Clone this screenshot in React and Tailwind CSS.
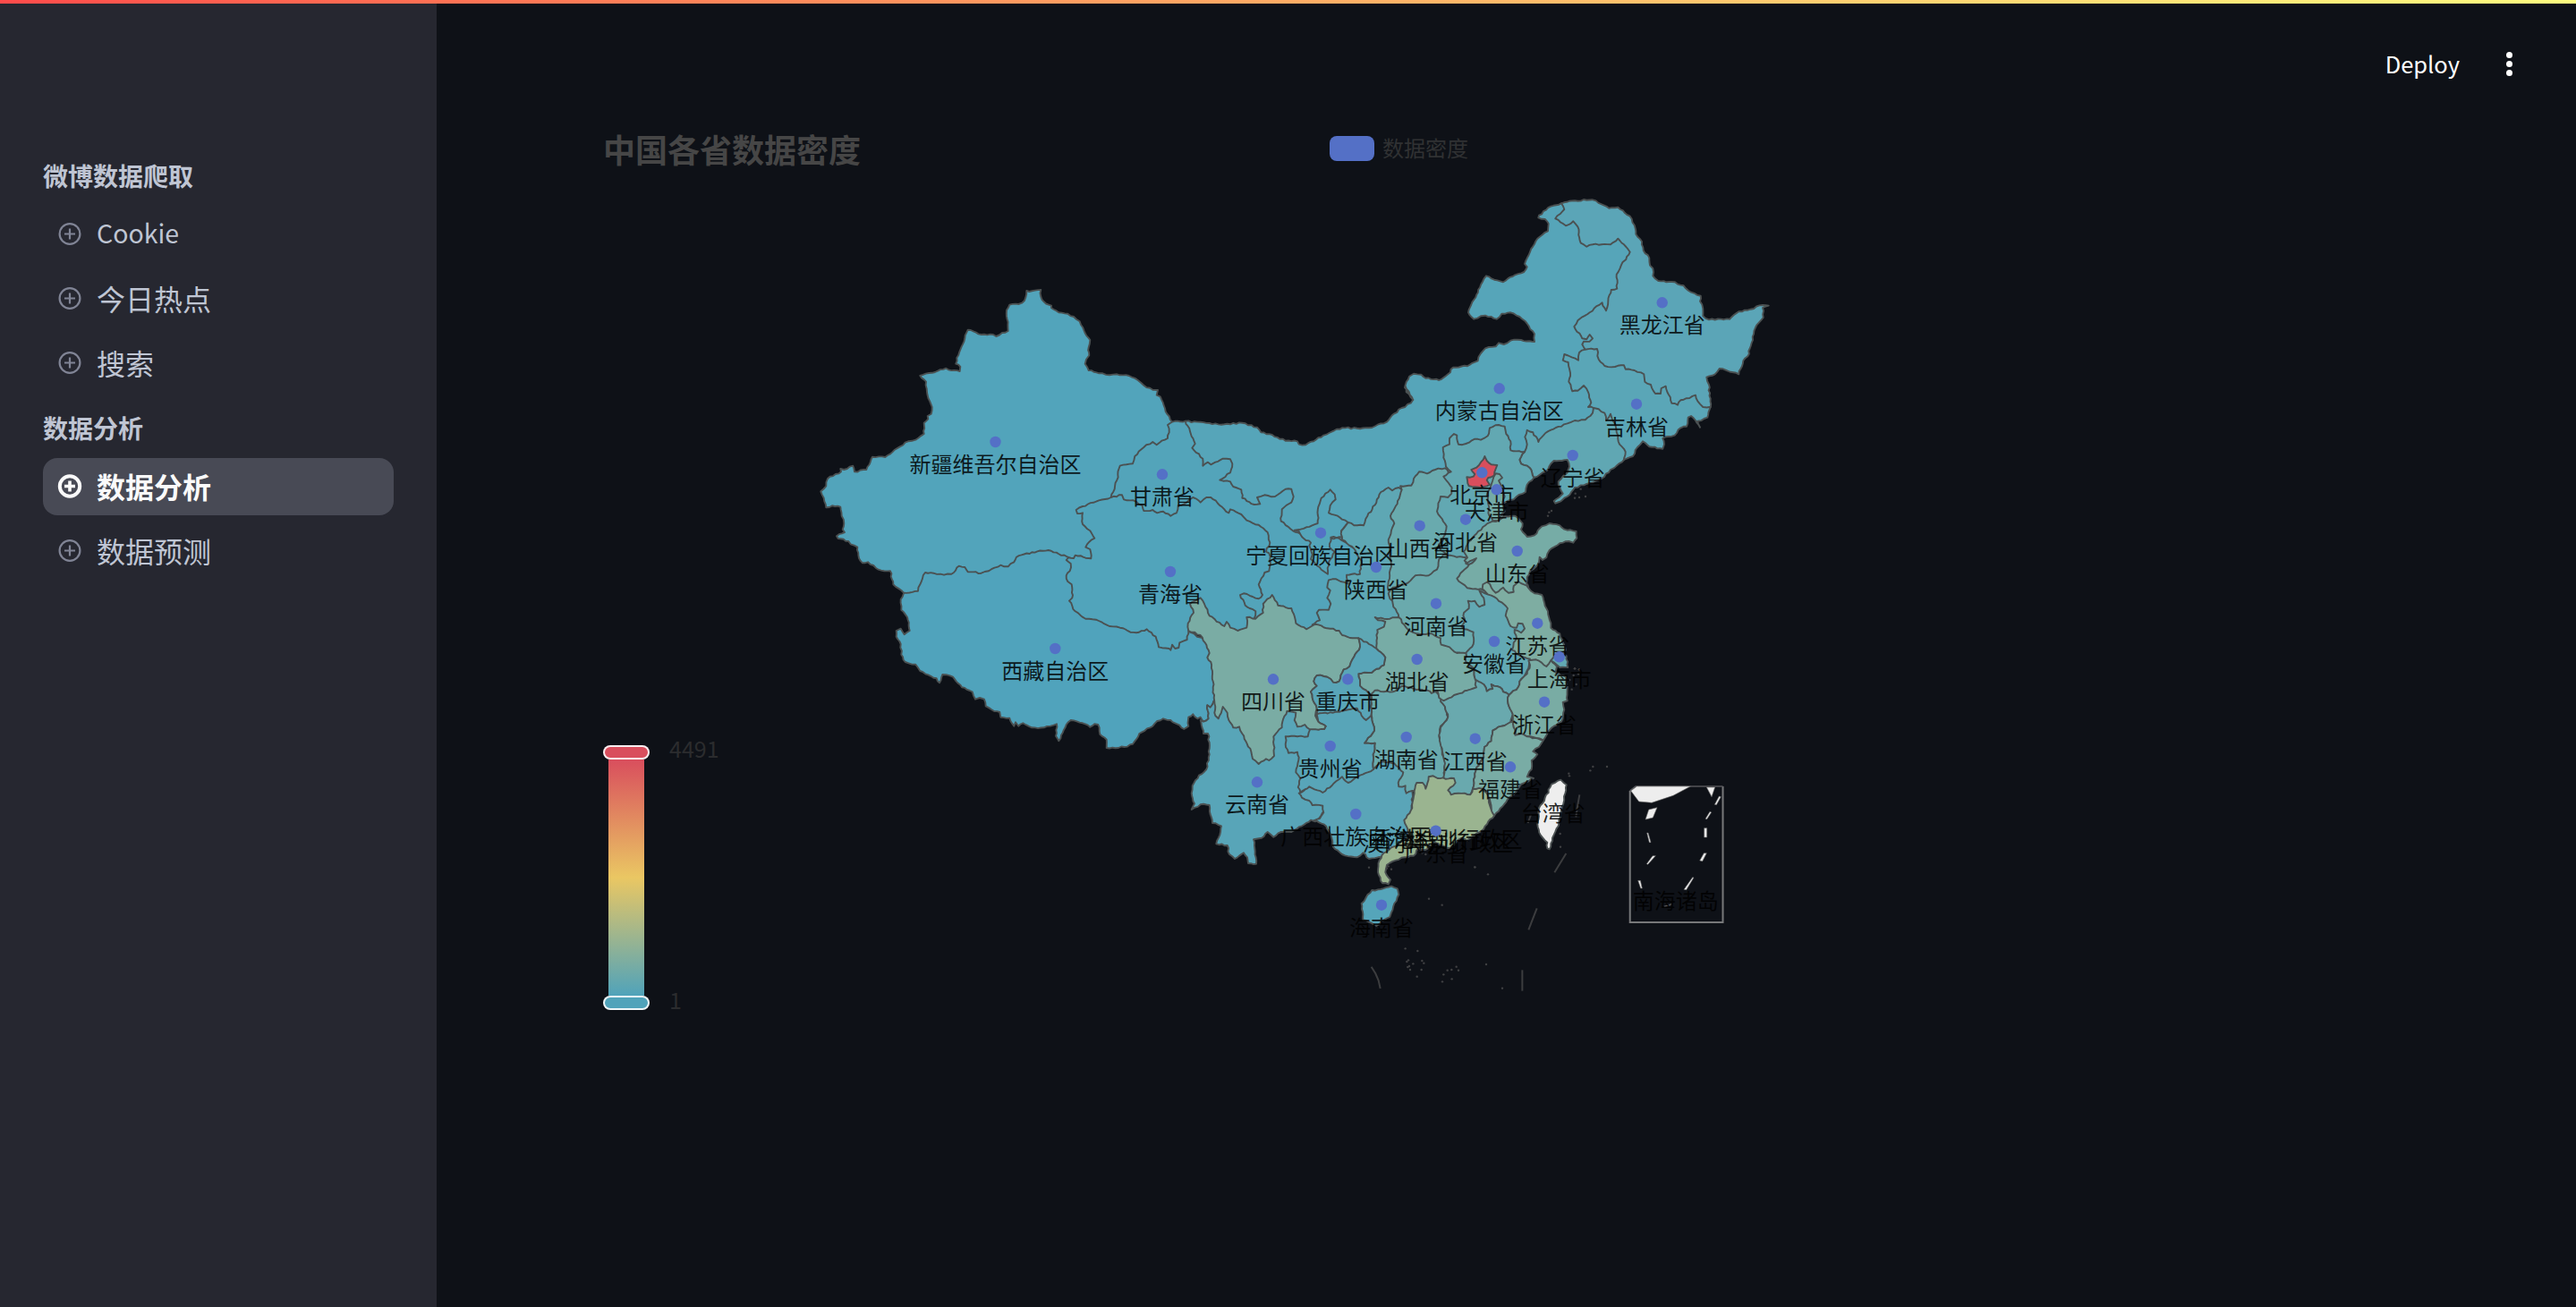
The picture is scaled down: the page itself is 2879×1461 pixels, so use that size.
import React from "react";

/* Origins of the survey sheets; coordinates on a sheet are in thirds of a pixel. */
const SHEETS = {
  A: [900, 310],
  B: [980, 600],
  C: [1300, 430],
  D: [1560, 210],
  E: [1600, 500],
  F: [1300, 780],
  G: [1560, 740],
};

function parse(data) {
  let origin = [0, 0];
  const pts = [];
  for (const t of data.split(/\s+/)) {
    if (SHEETS[t]) {
      origin = SHEETS[t];
    } else if (t) {
      const [x, y] = t.split(",").map(Number);
      pts.push([origin[0] + x / 3, origin[1] + y / 3]);
    }
  }
  return pts;
}

function noise(x, y, k) {
  const s = Math.sin(x * 12.9898 + y * 78.233 + k * 37.719) * 43758.5453;
  return (s - Math.floor(s)) * 2 - 1;
}

/* Adds a small ripple to an edge; it depends only on the end points, so neighbours share it. */
function ripple(a, b) {
  const flip = a[0] > b[0] || (a[0] === b[0] && a[1] > b[1]);
  const [p, q] = flip ? [b, a] : [a, b];
  const dx = q[0] - p[0];
  const dy = q[1] - p[1];
  const len = Math.hypot(dx, dy);
  const n = Math.min(12, Math.floor(len / 3));
  const mids = [];
  for (let i = 1; i < n; i++) {
    const t = i / n;
    const r = noise(Math.round(p[0] + q[0]), Math.round(p[1] + q[1]), i) * 0.85;
    mids.push([p[0] + dx * t - (dy / len) * r, p[1] + dy * t + (dx / len) * r]);
  }
  return flip ? mids.reverse() : mids;
}

function outline(data) {
  const pts = parse(data);
  const out = [];
  pts.forEach((p, i) => {
    out.push(p, ...ripple(p, pts[(i + 1) % pts.length]));
  });
  return "M" + out.map((p) => p[0].toFixed(1) + " " + p[1].toFixed(1)).join("L") + "Z";
}

/* Drawn in order: later provinces cover the parts of earlier ones that reach below them. */
const PROVINCES = [
  ["内蒙古", "#56a5b9", "C 75,122 195,134 265,128 315,143 328,160 365,168 410,188 450,190 455,200 478,202 520,178 565,158 600,145 650,146 700,144 750,125 775,97 800,78 830,62 838,50 815,25 812,5 D 58,712 30,670 45,632 60,623 85,626 100,638 145,645 175,625 192,602 240,598 275,580 285,555 300,538 335,532 345,520 362,525 385,512 420,510 465,516 465,490 440,455 415,432 385,418 355,422 338,440 320,432 300,428 285,430 262,440 243,418 262,375 285,325 303,295 330,308 360,316 400,292 430,282 440,265 432,255 450,215 475,170 510,145 512,120 500,105 478,100 480,92 520,62 555,52 700,100 820,215 790,340 740,400 720,480 700,560 690,740 600,850 450,930 250,890 130,1000 C 820,400 740,450 620,560 500,560 350,440 200,400 60,200"],
  ["新疆", "#52a4bb", "A 1230,485 1208,450 1190,400 1178,395 1182,378 1165,377 1135,362 1115,345 1085,330 1045,325 1020,328 985,322 950,312 938,290 942,275 952,262 950,235 955,210 935,180 920,148 900,132 880,122 850,118 825,103 825,95 800,82 790,65 790,42 760,46 742,45 735,78 715,90 685,92 675,110 680,180 660,186 640,198 630,192 590,192 545,176 535,205 508,270 505,290 520,300 518,315 480,310 472,305 435,318 385,330 405,350 408,385 425,435 422,458 410,465 412,475 398,488 398,525 370,545 345,550 300,578 268,603 225,602 205,645 165,652 160,632 130,645 118,642 120,652 75,675 70,700 52,718 62,740 70,772 90,766 118,770 122,800 130,825 125,845 132,855 105,868 110,876 145,885 152,895 175,905 180,942 192,958 210,955 245,980 285,985 295,1030 330,1058 400,1100 900,1100 1000,900 1100,800 1100,700 1210,560"],
  ["西藏", "#50a3bc", "A 330,1058 378,1052 385,1030 402,990 430,992 465,998 490,995 515,968 535,972 545,988 590,992 615,985 655,965 680,970 700,955 708,938 760,922 815,915 850,928 885,940 950,1080 B 1050,320 1200,400 1170,560 1130,550 1118,572 1108,565 1112,610 1095,620 1085,605 1075,610 1060,595 1045,605 1045,635 1030,645 1015,632 1000,625 985,615 960,610 940,618 925,635 880,660 858,695 830,705 770,708 770,680 748,662 742,630 730,628 715,638 690,625 650,615 635,630 618,665 610,685 600,668 603,628 560,640 520,640 490,625 475,635 465,622 460,635 445,608 415,605 412,588 385,580 365,568 360,545 345,540 330,545 320,520 285,505 255,470 220,462 210,490 200,475 145,450 130,428 95,420 82,395 80,360 65,335 65,315 80,308 92,328 110,315 102,270 82,245 80,210 90,190"],
  ["甘肃", "#53a4ba", "A 1230,485 1215,495 1220,520 1215,540 1195,548 1178,562 1165,552 1135,570 1105,600 1098,625 1055,632 1045,680 1025,738 1150,850 C 60,480 200,640 200,780 300,840 480,900 500,820 700,760 660,560 590,515 500,520 435,490 395,458 398,418 430,395 437,375 430,350 410,350 375,375 340,370 315,378 325,400 305,402 265,380 262,352 235,342 225,325 190,320 225,295 232,265 225,250 200,248 175,260 160,268 150,260 133,272 133,248 97,212 107,198 75,122"],
  ["青海", "#51a4bb", "A 1025,738 975,752 930,768 908,780 912,792 930,790 930,828 955,850 970,875 945,895 940,905 955,912 958,943 905,932 900,942 882,940 875,948 890,960 887,985 875,1000 880,1020 893,1030 895,1075 885,1085 905,1120 940,1145 975,1148 B 780,300 815,305 850,320 870,322 905,310 935,335 945,370 980,375 985,380 990,362 1000,375 1012,372 1015,355 1040,345 1045,315 1150,330 1200,340 1250,300 C 305,785 310,760 290,750 275,740 258,705 270,700 320,718 333,705 320,670 340,630 355,625 360,600 355,565 345,560 358,530 350,495 320,470 280,455 262,435 225,418 220,430 160,378 145,378 125,395 100,378 70,400 50,405 45,430 25,440 0,425 A 1180,790 1165,780 1135,783 1130,765 1100,748 1068,745 1062,730"],
  ["宁夏", "#54a5ba", "C 440,488 480,478 518,465 520,410 530,380 560,352 575,368 578,385 560,405 555,430 585,440 600,452 620,462 597,490 600,512 562,512 558,545 575,560 555,595 552,635 530,620 510,600 495,585 500,570 490,540 495,530 465,510 455,492"],
  ["陕西", "#5ea7b4", "C 620,462 640,472 672,472 685,440 715,395 730,360 755,345 768,355 790,345 800,352 830,400 820,500 800,640 790,780 760,860 680,910 620,870 510,830 500,805 525,790 515,765 522,755 555,755 562,735 550,715 560,690 550,680 555,655 580,652 595,660 620,668 615,638 660,635 665,590 640,550 600,520 598,490"],
  ["山西", "#69aaae", "C 800,352 795,340 832,338 840,315 858,292 885,298 912,285 945,280 990,330 980,400 970,500 950,590 918,630 820,690 780,690 755,690 755,660 765,610 760,560 755,520 768,480 775,465 762,440 785,400"],
  ["辽宁", "#60a7b3", "D 432,885 415,912 420,925 448,938 463,972 485,960 510,945 520,925 530,915 575,912 582,935 575,955 555,975 545,985 550,1005 560,1025 530,1050 535,1058 560,1045 575,1035 600,1005 650,990 690,975 720,945 765,912 790,860 780,740 700,700 663,738 660,755 635,778 600,780 575,790 555,800 520,812 495,830 478,852 460,820 440,812 433,835 440,860"],
  ["黑龙江", "#5ba5b7", "D 555,52 600,43 660,40 690,55 715,68 745,65 785,95 800,125 805,155 825,180 830,210 850,235 852,260 862,270 862,295 880,312 925,315 965,328 990,350 1022,362 1020,380 1030,405 1030,430 1050,442 1120,440 1150,415 1180,410 1230,393 1250,395 1230,402 1232,435 1210,460 1200,490 1190,530 1180,565 1165,580 1150,625 1085,606 1070,625 1042,635 1050,660 1055,735 900,760 800,680 650,600 635,542 625,525 630,515 650,515 660,505 650,492 640,508 625,505 598,465 610,445 650,418 692,385 705,412 712,380 722,342 742,338 740,290 760,250 772,240 785,215 765,190 745,170 720,190 690,190 660,190 640,197 620,185 610,130 595,112 570,127 535,103 565,72"],
  ["吉林", "#5aa6b7", "D 663,738 680,742 700,755 705,780 720,758 725,775 735,790 745,830 750,860 770,885 765,912 795,900 810,870 828,850 850,868 895,875 900,860 895,840 935,830 955,805 975,800 980,770 990,765 1005,780 1020,803 1012,782 1045,770 1055,735 1030,735 1012,715 1005,695 985,705 955,712 945,728 925,722 905,665 890,672 888,690 870,690 855,660 835,650 832,625 800,612 770,608 765,595 735,600 700,597 680,575 675,540 635,542 615,552 612,578 590,568 565,558 560,578 578,585 585,620 580,650 592,682 610,680 630,663 645,685 655,720 645,735"],
  ["河北", "#62a8b2", "D 168,935 160,905 158,870 180,860 180,840 195,825 205,830 210,860 235,858 265,842 285,845 308,832 315,805 345,795 365,800 370,825 385,850 385,880 432,885 415,912 420,925 448,938 463,972 440,995 435,1020 405,1035 395,1045 375,1050 360,1060 355,1090 E 240,235 200,330 150,380 115,400 75,390 50,360 C 930,555 925,535 940,520 950,475 935,450 918,425 922,410 930,375 955,378 967,365 968,345 940,308 965,292"],
  ["河南", "#6aaaad", "C 820,665 845,640 890,640 918,620 925,585 940,570 975,575 1015,580 1015,600 1060,620 1080,700 1080,760 1050,800 1060,870 1015,900 900,900 800,820 790,780 770,735 755,700 770,680 800,672"],
  ["山东", "#76aca6", "E 225,245 245,232 280,230 305,255 300,275 320,300 345,295 370,265 395,255 430,262 445,275 485,282 487,305 475,320 460,315 430,322 395,345 385,370 372,378 362,368 360,385 350,400 330,415 320,435 318,455 325,472 260,500 200,490 165,475 120,472 100,455 85,440 105,415 150,372 120,388 110,380 120,370 108,350 120,325 150,290 180,262 205,248"],
  ["江苏", "#7eada2", "E 170,475 172,460 185,452 195,458 200,470 215,488 240,470 258,488 275,485 275,465 290,450 310,460 325,472 345,490 370,495 385,540 400,590 400,605 430,625 440,655 450,680 430,695 405,715 385,740 330,750 270,680 250,600 230,540"],
  ["安徽", "#62a8b3", "E 160,480 200,497 235,520 255,540 248,565 265,600 285,605 290,590 305,592 312,608 300,622 278,612 285,640 275,655 270,680 300,700 330,710 325,740 315,760 G 415,65 410,85 380,110 360,100 350,85 320,75 325,90 305,98 295,75 270,85 C 1045,985 1040,950 1015,930 1015,900 1040,870 1040,830 1010,820 1000,810 1010,795 1008,765 1025,750 1022,725 1045,725 1060,745 1078,738 1075,715"],
  ["云南", "#58a5b8", "F 125,75 135,120 150,120 155,150 155,190 145,240 120,260 98,295 95,320 105,355 95,375 125,358 155,360 165,420 195,430 190,460 178,490 215,495 222,525 240,540 270,520 282,535 285,555 312,557 308,515 303,475 330,470 350,450 370,467 395,450 430,450 465,430 495,410 510,415 540,380 500,200 520,20 440,-40 350,20 200,20 170,10 158,32 148,25 152,70 135,80"],
  ["广西", "#5aa5b8", "F 455,320 465,335 490,345 500,360 535,362 538,385 525,405 505,412 540,425 550,440 565,470 570,500 600,525 650,535 670,520 690,540 720,535 760,520 820,470 835,400 835,312 820,260 740,180 600,230 520,280"],
  ["湖南", "#69aaae", "F 697,-10 720,-50 900,-40 940,10 955,65 930,95 925,130 935,155 935,190 945,215 940,270 920,300 835,312 815,320 812,295 790,298 788,285 805,250 775,220 730,215 705,240 705,200 710,152 675,152 708,110 700,75 697,30"],
  ["江西", "#69a9ae", "G 150,132 160,90 200,60 250,55 295,75 305,98 325,90 320,75 350,85 360,100 380,110 375,130 392,175 385,205 355,215 325,230 320,265 297,285 295,320 270,355 258,425 240,460 175,450 160,390 165,340 155,290 145,245 150,220 175,185 165,150"],
  ["贵州", "#58a5b8", "F 410,130 450,130 485,130 493,105 540,105 545,95 520,80 510,40 650,20 690,30 700,75 708,110 675,152 710,152 705,200 705,240 660,260 620,285 600,265 580,280 535,318 490,298 460,318 452,300 460,270 445,250 455,200 450,182 420,185 410,155"],
  ["四川", "#7aaca4", "C 90,735 125,715 138,735 155,775 205,810 213,795 225,815 250,825 280,815 280,780 310,785 335,765 335,735 365,705 385,740 430,750 445,800 480,820 510,803 560,818 590,825 600,840 635,850 655,850 660,880 635,920 625,945 605,955 590,995 570,998 550,980 515,975 505,995 515,1010 495,1030 500,1050 515,1085 510,1110 F 520,80 545,95 540,105 490,105 475,90 450,97 440,75 445,50 415,45 400,80 398,100 370,130 372,195 355,210 345,205 320,222 300,205 295,180 265,120 255,97 235,100 220,75 215,50 200,30 185,70 175,60 170,0 C 165,960 160,930 148,915 155,900 140,865 125,840 85,825 83,800 102,765"],
  ["湖北", "#77aca6", "C 710,780 740,785 790,780 808,805 825,825 850,835 900,835 930,850 932,872 960,880 985,900 1015,900 1015,930 1040,950 1045,985 1050,1015 1020,1025 985,1038 940,1060 925,1050 920,1028 900,1035 885,1025 840,1020 800,1010 770,1030 710,1025 695,1040 680,1025 660,1010 655,970 675,965 700,965 740,940 745,915 715,885 718,822 740,812 745,795 720,790"],
  ["重庆", "#59a5b8", "C 655,850 690,870 715,885 745,915 740,940 700,965 675,965 655,970 660,1010 680,1025 695,1040 697,1110 680,1125 665,1110 650,1085 620,1090 570,1100 515,1105 515,1085 500,1050 495,1030 515,1010 505,995 515,975 550,980 570,998 590,995 605,955 625,945 635,920 660,880"],
  ["浙江", "#79aca4", "G 445,-5 470,-8 505,15 520,-5 540,15 535,35 570,50 575,90 575,130 560,135 565,160 555,200 530,215 510,235 495,262 470,255 440,250 420,240 400,245 392,200 392,175 375,130 380,110 410,85 415,65 440,40 450,10"],
  ["上海", "#62a8b2", "E 400,715 415,695 440,690 452,700 457,738 430,738 420,730"],
  ["福建", "#79aca5", "G 392,200 400,245 420,240 440,250 495,262 480,285 460,300 475,310 455,330 455,360 440,385 462,390 445,400 420,410 400,440 375,460 345,500 330,515 320,500 315,460 290,440 258,425 270,355 295,320 297,285 320,265 325,230 355,215"],
  ["广东", "#9ab490", "G 330,515 310,535 295,560 270,575 240,600 220,590 180,625 130,605 100,630 75,625 60,650 30,655 0,665 F 750,560 745,585 762,610 755,625 735,622 720,585 725,545 740,520 790,490 825,470 820,440 808,410 835,370 840,330 850,285 870,285 880,305 890,265 905,262 920,270 975,270 980,285 955,310 965,325 990,320 1030,325 G 258,425 290,425 310,450 318,490"],
  ["海南", "#55a5ba", "F 665,690 680,670 700,645 730,642 765,632 785,640 790,660 775,690 765,720 760,735 740,745 715,765 690,752 670,745"],
  ["北京", "#d94e5d", "E 178,30 185,45 200,58 220,60 215,72 210,95 190,102 185,110 195,125 165,135 125,130 118,100 140,98 145,90 133,75 150,68 165,50"],
  ["天津", "#74aba7", "E 208,100 215,88 228,90 237,102 225,112 232,125 240,150 245,165 238,185 245,215 225,245 205,245 200,235 190,220 190,190 185,160 195,140 200,125"],
  ["台湾", "#eeeeee", "G 553,395 572,412 568,440 562,475 552,510 545,550 525,590 515,628 508,625 508,605 485,580 475,545 480,490 498,465 522,410"],
];

const CITIES = [
  ["新疆维吾尔自治区", 1112.5, 494], ["甘肃省", 1299, 530.3], ["青海省", 1308, 639],
  ["西藏自治区", 1179.3, 725], ["四川省", 1423, 759.3], ["重庆市", 1506.3, 759.3],
  ["宁夏回族自治区", 1476, 595.7], ["陕西省", 1538, 634], ["山西省", 1586.7, 587.7],
  ["河北省", 1638, 580.7], ["北京市", 1656.3, 528.3], ["天津市", 1672.7, 547.3],
  ["山东省", 1695.7, 616], ["河南省", 1605, 674.7], ["安徽省", 1670, 717],
  ["湖北省", 1583.7, 737], ["江苏省", 1718.3, 696.7], ["上海市", 1742.7, 734.3],
  ["浙江省", 1726, 784.7], ["福建省", 1688, 857.3], ["江西省", 1648.7, 825.7],
  ["湖南省", 1571.7, 824], ["贵州省", 1486.7, 834], ["云南省", 1405, 874.3],
  ["广西壮族自治区", 1515.3, 910], ["广东省", 1604.7, 928.7], ["海南省", 1544, 1011.7],
  ["黑龙江省", 1857.7, 338.3], ["吉林省", 1829, 451.7], ["辽宁省", 1757.7, 509],
  ["内蒙古自治区", 1675.7, 434.3],
];

const PLAIN_LABELS = [
  ["台湾省", 1735.7, 883.5], ["南海诸岛", 1872.7, 982],
  ["香港特别行政区", 1617.5, 912.5], ["澳门特别行政区", 1607, 917],
];

/* Boundary dashes at sea. */
const DASHES = [
  "F 698,902 712,925 722,948 728,975", "G 616,445 608,490 604,520", "G 571,642 532,706",
  "G 473,826 445,898", "G 424,1033 424,1103", "G 453,512 443,540",
];

const ISLETS =
  "F 690,569 812,841 853,849 822,880 817,885 838,892 825,900 820,903 828,912 868,882 874,890 866,912 851,935 891,674 935,695 983,902 990,914 967,912 953,914 940,928 936,952 968,943 G 265,688 309,712 303,1014 357,1094 551,576 552,620 661,351 652,364 708,351 580,374 582,382 600,22 612,40 590,92 583,60 615,25 596,45 605,75 E 500,140 516,165 495,168 482,155 480,170 394,218 390,230 402,213 480,742 495,745 F 880,525 868,520 755,565 765,575 750,572 1045,568";

const INSET_SHAPES = [
  "G 788,432 808,417 988,417 930,448 858,472 815,468",
  "G 1042,420 1070,420 1059,452",
  "G 848,495 876,488 862,522 837,528",
  "G 1084,450 1090,452 1075,479 1069,478",
  "G 1053,502 1058,504 1043,527 1038,526",
  "G 1034,557 1043,557 1043,588 1034,588",
  "G 1033,641 1042,641 1028,668 1019,666",
  "G 995,722 999,723 974,764 966,763",
  "G 842,573 846,573 855,605 850,605",
  "G 861,650 871,650 845,679 841,677",
  "G 812,733 820,733 826,759 821,759",
];

const toPoints = (data) => parse(data).map((p) => p.join(",")).join(" ");

function ChinaMap() {
  return (
    <svg className="block h-[925px] w-[1080px] shrink-0" viewBox="910 215 1080 925">
      <g stroke="#4b5152" strokeWidth="1.9" strokeLinejoin="round">
        {PROVINCES.map(([name, fill, data]) => (
          <path key={name} d={outline(data)} fill={fill} />
        ))}
      </g>
      <g fill="none" stroke="#3c3d3f" strokeWidth="2">
        {DASHES.map((d) => (
          <polyline key={d} points={toPoints(d)} />
        ))}
      </g>
      <g fill="#404143">
        {parse(ISLETS).map(([x, y], i) => (
          <circle key={i} cx={x} cy={y} r="1.2" />
        ))}
      </g>
      <path d="M1821.7 884V1031H1925.5V879" fill="none" stroke="#77787a" strokeWidth="2" />
      <path d="M1821.7 884L1828 879H1925.5" fill="none" stroke="#55565a" strokeWidth="1.6" />
      <g fill="#ededed" stroke="#666" strokeWidth="0.6">
        {INSET_SHAPES.map((d) => (
          <polygon key={d} points={toPoints(d)} />
        ))}
      </g>
      <polygon points={toPoints("G 898,818 925,810 922,816 901,822")} fill="#55565a" />
      <g
        className="[font-family:'Noto_Sans_CJK_SC',sans-serif]"
        fontSize="24"
        textAnchor="middle"
        fill="#000"
        fillOpacity="0.85"
      >
        {[...PLAIN_LABELS, ...CITIES].map(([name, x, y]) => (
          <text key={name} x={x} y={y + 34}>
            {name}
          </text>
        ))}
      </g>
      <g fill="#5470c6">
        {CITIES.map(([name, x, y]) => (
          <circle key={name} cx={x} cy={y} r="6.2" />
        ))}
      </g>
    </svg>
  );
}

function PlusIcon({ active }) {
  return (
    <svg
      className={active ? "size-[28px] shrink-0 text-[#fafafa]" : "size-[28px] shrink-0 text-[#808495]"}
      viewBox="0 0 28 28"
      fill="none"
      stroke="currentColor"
    >
      <circle cx="14" cy="13.5" r={active ? 11.2 : 11.4} strokeWidth={active ? 4 : 2.2} />
      <path d="M14 7.5V19.5M8 13.5H20" strokeWidth={active ? 3.6 : 2.2} />
    </svg>
  );
}

function NavItem({ label, active, latin }) {
  return (
    <a
      className={
        "flex h-16 items-center gap-4 rounded-2xl pl-4 leading-none " +
        (latin ? "text-[28.5px] " : "text-[32px] ") +
        (active ? "bg-[#484a55] font-bold text-[#fafafa]" : "text-[#bfc5d3]")
      }
    >
      <PlusIcon active={active} />
      <span className="mb-[3px]">{label}</span>
    </a>
  );
}

function NavSection({ title, items, className }) {
  return (
    <section className={className}>
      <h2 className="flex h-10 items-center pb-[2px] text-[28px] leading-none font-bold text-[#bfc5d3]">{title}</h2>
      <nav className="mt-[13px] flex flex-col gap-2">
        {items.map((item) => (
          <NavItem key={item.label} {...item} />
        ))}
      </nav>
    </section>
  );
}

function ColorScale() {
  return (
    <div className="flex w-[236px] shrink-0 gap-[22px] pt-[618px]">
      <div className="flex h-[296px] w-[52px] flex-col items-center">
        <div className="h-4 w-full shrink-0 rounded-full border-2 border-white/90 bg-[#d94e5d]" />
        <div className="w-10 flex-1 bg-[linear-gradient(#d94e5d,#eac763_50%,#50a3ba)]" />
        <div className="h-4 w-full shrink-0 rounded-full border-2 border-white/90 bg-[#50a3ba]" />
      </div>
      <div className="flex h-[296px] flex-col justify-between text-[25px] leading-4 text-[#2b2c2e]">
        <span className="-mt-[5px]">4491</span>
        <span className="mb-1">1</span>
      </div>
    </div>
  );
}

export default function App() {
  return (
    <div className="flex h-[1461px] w-[2879px] flex-col overflow-hidden bg-[#0e1117] [font-family:'Noto_Sans_CJK_SC',sans-serif]">
      <div className="h-1 w-full shrink-0 bg-linear-to-r from-[#ff4b4b] to-[#fffd80]" />
      <div className="flex min-h-0 flex-1">
        <aside className="w-[488px] shrink-0 bg-[#262730] px-12 pt-[173px]">
          <NavSection
            title="微博数据爬取"
            items={[{ label: "Cookie", latin: true }, { label: "今日热点" }, { label: "搜索" }]}
          />
          <NavSection
            className="mt-[21px]"
            title="数据分析"
            items={[{ label: "数据分析", active: true }, { label: "数据预测" }]}
          />
        </aside>
        <main className="flex flex-1 flex-col">
          <header className="flex h-[116px] items-center justify-end gap-[52px] pt-5 pr-[71px] text-white">
            <span className="mb-[2px] text-[25.5px] leading-none">Deploy</span>
            <span className="mb-[2px] flex flex-col gap-[3px]">
              <i className="size-[7px] rounded-full bg-white" />
              <i className="size-[7px] rounded-full bg-white" />
              <i className="size-[7px] rounded-full bg-white" />
            </span>
          </header>
          <div className="pl-[186px]">
            <div className="flex h-[95px] items-center pb-[3px]">
              <h1 className="w-[812px] text-4xl leading-none font-bold text-[#464646]">中国各省数据密度</h1>
              <div className="flex items-center gap-[9px]">
                <span className="h-7 w-[50px] rounded-lg bg-[#5470c6]" />
                <span className="mb-[2px] text-2xl leading-none text-[#303133]">数据密度</span>
              </div>
            </div>
            <div className="flex">
              <ColorScale />
              <ChinaMap />
            </div>
          </div>
        </main>
      </div>
    </div>
  );
}
